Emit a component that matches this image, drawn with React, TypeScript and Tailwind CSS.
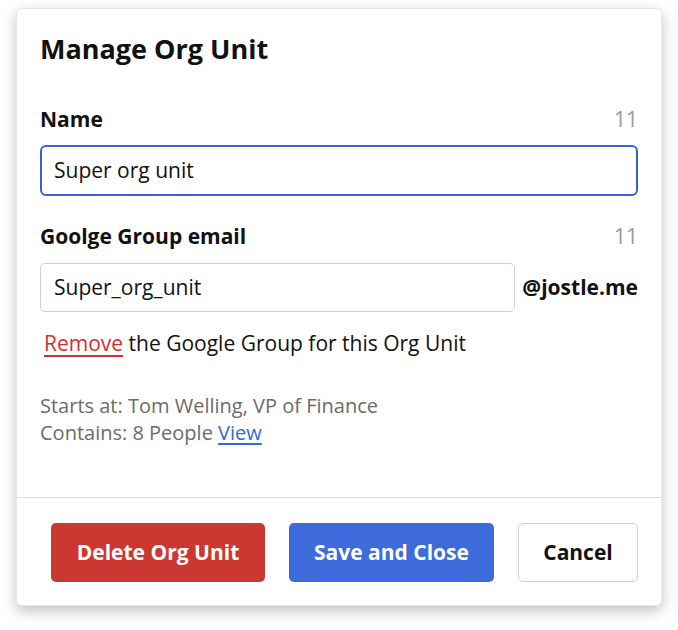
import React from "react";

export default function App() {
  return (
    <div className="w-[678px] h-[630px] bg-white pt-[8px] pl-[16px]" style={{ fontFamily: '"Open Sans", sans-serif' }}>
      <div className="w-[646px] h-[598px] bg-white rounded-[6px] shadow-[0_5px_14px_rgba(0,0,0,0.25)] border border-[#e8e8e8] flex flex-col">
        <div className="px-[23px] pt-[22px] flex-1">
          <h1 className="text-[27px] leading-[36px] font-bold text-[#111]">Manage Org Unit</h1>
          <div className="mt-[38px] flex justify-between items-center">
            <span className="text-[21px] leading-[28px] font-bold text-[#111]">Name</span>
            <span className="text-[21px] leading-[28px] text-[#999]">11</span>
          </div>
          <div className="mt-[12px] h-[51px] rounded-[6px] border-2 border-[#3563d6] flex items-center px-[12px] text-[21px] text-[#111]">
            Super org unit
          </div>
          <div className="mt-[26px] flex justify-between items-center">
            <span className="text-[21px] leading-[28px] font-bold text-[#111]">Goolge Group email</span>
            <span className="text-[21px] leading-[28px] text-[#999]">11</span>
          </div>
          <div className="mt-[13px] flex items-center">
            <div className="w-[475px] h-[49px] rounded-[5px] border border-[#cfcfcf] flex items-center px-[13px] text-[21px] text-[#111]">
              Super_org_unit
            </div>
            <span className="ml-auto text-[21px] font-bold text-[#111]">@jostle.me</span>
          </div>
          <p className="mt-[17px] pl-[4px] text-[21px] leading-[28px] text-[#111]">
            <span className="text-[#d32f2f] underline decoration-[#d32f2f] underline-offset-[4px]">Remove</span> the Google Group for this Org Unit
          </p>
          <div className="mt-[35px] text-[20px] leading-[27px] text-[#6b6b6b]">
            <div>Starts at: Tom Welling, VP of Finance</div>
            <div>
              Contains: 8 People{" "}
              <span className="text-[#2f6bd6] underline underline-offset-[3px]">View</span>
            </div>
          </div>
        </div>
        <div className="border-t border-[#dcdcdc] h-[108px] flex items-start justify-end gap-[24px] pr-[23px] pt-[25px]">
          <button className="h-[59px] w-[214px] rounded-[5px] bg-[#cb3832] text-white text-[21px] font-bold">Delete Org Unit</button>
          <button className="h-[59px] w-[205px] rounded-[5px] bg-[#3e6bdb] text-white text-[21px] font-bold">Save and Close</button>
          <button className="h-[59px] w-[120px] rounded-[5px] border border-[#d0d0d0] bg-white text-[#111] text-[21px] font-bold">Cancel</button>
        </div>
      </div>
    </div>
  );
}
